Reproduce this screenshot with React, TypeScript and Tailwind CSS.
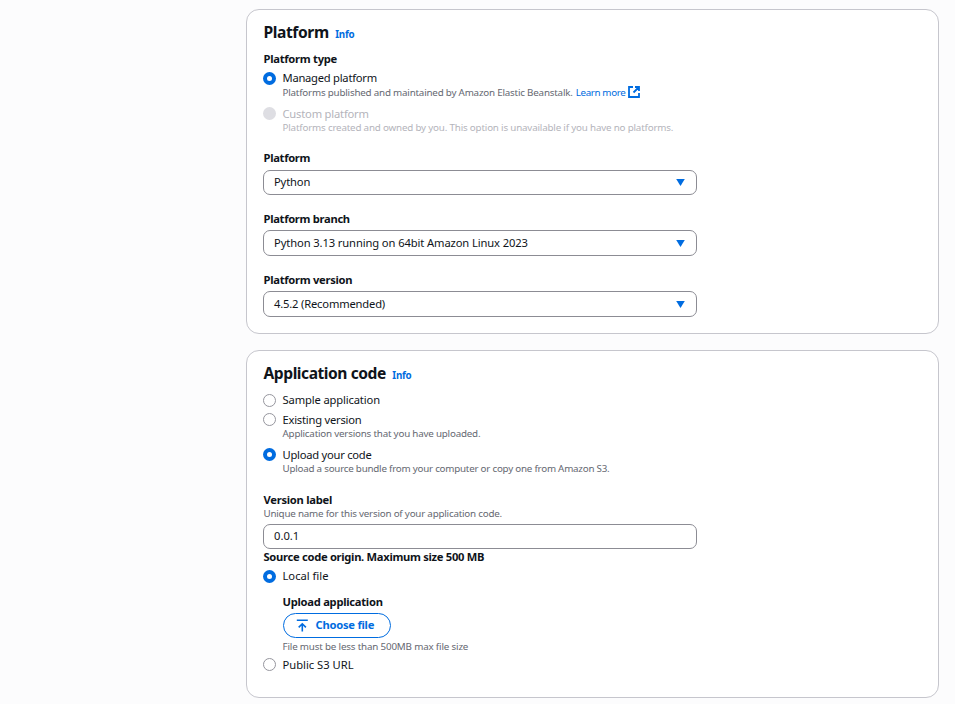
import React from "react";

function Radio({ state }: { state: "on" | "off" | "disabled" }) {
  const styles = {
    on: "bg-[#006ce0]",
    off: "border border-[#96969e] bg-white",
    disabled: "bg-[#dedee3]",
  };
  return (
    <span className={`flex h-[13px] w-[13px] shrink-0 items-center justify-center rounded-full ${styles[state]}`}>
      {state === "on" && <span className="h-[5.4px] w-[5.4px] rounded-full bg-white" />}
    </span>
  );
}

function Option({ state, label, track, low = false, className = "", children }: {
  state: "on" | "off" | "disabled";
  label: string;
  track: string;
  low?: boolean;
  className?: string;
  children?: React.ReactNode;
}) {
  const gray = state === "disabled";
  return (
    <div className={`flex gap-[6.5px] ${className}`}>
      <span className={`flex items-center ${low ? "h-[17px]" : "h-[15px]"}`}><Radio state={state} /></span>
      <div className="h-fit">
        <div className={`h-4 text-[11.2px] leading-4 ${track} ${gray ? "text-[#b4b4bb]" : "text-[#0f141a]"}`}>{label}</div>
        {children}
      </div>
    </div>
  );
}

function Desc({ track, color = "text-[#656871]", children }: { track: string; color?: string; children: React.ReactNode }) {
  return <div className={`-mt-px flex h-[13px] items-center whitespace-nowrap text-[9.8px] leading-[13px] ${color} ${track}`}>{children}</div>;
}

function Label({ track, className = "", children }: { track: string; className?: string; children: React.ReactNode }) {
  return <div className={`h-4 pl-[0.5px] text-[11.2px] font-bold leading-4 ${track} ${className}`}><span>{children}</span></div>;
}

function Select({ value, track, className }: { value: string; track: string; className: string }) {
  return (
    <div className={`flex w-[434px] items-center justify-between rounded-[7px] border border-[#8c8c94] bg-white pl-[10px] pr-[11px] text-[11.2px] leading-4 ${className}`}>
      <span className={track}>{value}</span>
      <svg width="9" height="7" viewBox="0 0 9 7"><path d="M0.2 0h8.6L4.5 7z" fill="#006ce0" /></svg>
    </div>
  );
}

function Heading({ track, children }: { track: string; children: React.ReactNode }) {
  return (
    <div className="flex h-[22px] items-baseline gap-[6.5px] pl-[0.5px] leading-[22px]">
      <h2 className={`text-[15.6px] font-bold ${track}`}>{children}</h2>
      <a className="text-[9.8px] font-bold tracking-[-0.25px] text-[#006ce0]">Info</a>
    </div>
  );
}

export default function App() {
  return (
    <main className="flex h-[704px] flex-col gap-4 overflow-hidden bg-[#fcfcfd] pl-[246px] pt-[9px] font-['Noto_Sans','Open_Sans',sans-serif] text-[#0f141a]">
      <section className="h-[325px] w-[693px] shrink-0 rounded-[13px] border border-[#c6c6cd] bg-white pl-4 pt-[11px]">
        <Heading track="tracking-[-0.4px]">Platform</Heading>
        <Label track="tracking-[-0.27px]" className="mt-2">Platform type</Label>
        <Option state="on" low label="Managed platform" track="tracking-[-0.25px]" className="mt-[3px]">
          <div className="pt-px">
            <Desc track="tracking-[-0.2px]">
              <span>Platforms published and maintained by Amazon Elastic Beanstalk.</span>
              <a className="ml-[3px] tracking-[-0.35px] text-[#006ce0]">Learn more</a>
              <svg className="mb-[2px] ml-[2.5px]" width="12" height="12" viewBox="0 0 12 12" fill="none" stroke="#006ce0" strokeWidth="1.8">
                <path d="M5 1H1v10h10V7M7 1h4v4M11 1L5.5 6.5" />
              </svg>
            </Desc>
          </div>
        </Option>
        <Option state="disabled" label="Custom platform" track="tracking-[-0.2px]" className="mt-[7px]">
          <Desc track="tracking-[-0.185px]" color="text-[#b4b4bb]"><span>Platforms created and owned by you. This option is unavailable if you have no platforms.</span></Desc>
        </Option>
        <Label track="tracking-[-0.3px]" className="mt-4">Platform</Label>
        <Select value="Python" track="-mt-px tracking-[-0.15px]" className="mt-1 h-[25px]" />
        <Label track="tracking-[-0.3px]" className="mt-4">Platform branch</Label>
        <Select value="Python 3.13 running on 64bit Amazon Linux 2023" track="tracking-[-0.11px]" className="mt-[3px] h-[26px]" />
        <Label track="tracking-[-0.28px]" className="mt-4">Platform version</Label>
        <Select value="4.5.2 (Recommended)" track="tracking-[-0.18px]" className="mt-[3px] h-[26px]" />
      </section>

      <section className="h-[348px] w-[693px] shrink-0 rounded-[13px] border border-[#c6c6cd] bg-white pl-4 pt-[11px]">
        <Heading track="tracking-[-0.45px]">Application code</Heading>
        <div className="h-2" />
        <Option state="off" low label="Sample application" track="tracking-[-0.14px]" className="h-4" />
        <Option state="off" label="Existing version" track="tracking-[-0.22px]" className="mt-1">
          <Desc track="tracking-[-0.2px]"><span>Application versions that you have uploaded.</span></Desc>
        </Option>
        <Option state="on" label="Upload your code" track="tracking-[-0.25px]" className="mt-[7px]">
          <Desc track="tracking-[-0.23px]"><span>Upload a source bundle from your computer or copy one from Amazon S3.</span></Desc>
        </Option>
        <Label track="tracking-[-0.27px]" className="mt-[17px]">Version label</Label>
        <Desc track="tracking-[-0.21px]"><span className="ml-[0.5px]">Unique name for this version of your application code.</span></Desc>
        <div className="mt-1 flex h-[25px] w-[434px] items-center rounded-[7px] border border-[#8c8c94] pl-[10px] text-[11.2px] leading-4">
          <span className="-mt-px">0.0.1</span>
        </div>
        <Label track="tracking-[-0.3px]">Source code origin. Maximum size 500 MB</Label>
        <Option state="on" low label="Local file" track="tracking-[0px]" className="mt-[3px] h-4" />
        <div className="ml-[19px] mt-[10px]">
          <Label track="tracking-[-0.27px]">Upload application</Label>
          <button className="ml-px mt-[3px] flex h-[25px] w-[108px] items-center rounded-full border-[1.5px] border-[#006ce0] pl-[12px] text-[11.2px] font-bold leading-4 text-[#006ce0]">
            <svg width="13" height="13" viewBox="0 0 13 13" fill="none" stroke="#006ce0" strokeWidth="1.6">
              <path d="M0.8 1.3h11M6.3 12.5V4.9M2.7 8.4L6.3 4.8l3.6 3.6" />
            </svg>
            <span className="-mt-px ml-[6.5px] tracking-[-0.25px]">Choose file</span>
          </button>
          <div className="pl-[0.5px] pt-[3px]"><Desc track="tracking-[-0.17px]"><span>File must be less than 500MB max file size</span></Desc></div>
        </div>
        <Option state="off" label="Public S3 URL" track="tracking-[0px]" className="mt-1" />
      </section>
    </main>
  );
}
